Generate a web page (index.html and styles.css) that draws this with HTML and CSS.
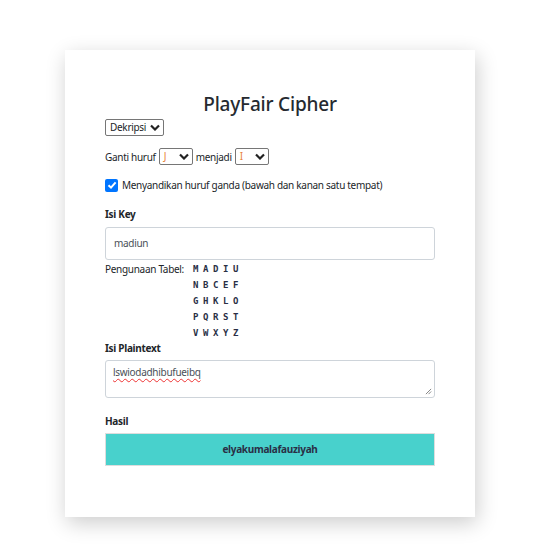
FILE: index.html
```html
<!DOCTYPE html>
<html>
<head>
<meta charset="utf-8">
<link rel="stylesheet" href="styles.css">
</head>
<body>
<div class="card">
  <h1 class="title">PlayFair Cipher</h1>
  <div class="row mode-row">
    <div class="select sel-mode"><span>Dekripsi</span><svg class="chev" viewBox="0 0 10 6"><path d="M1 1 L5 5 L9 1" /></svg></div>
  </div>
  <div class="row replace-row">
    <span>Ganti huruf</span>
    <div class="select sel-letter"><span class="orange">J</span><svg class="chev" viewBox="0 0 10 6"><path d="M1 1 L5 5 L9 1" /></svg></div>
    <span>menjadi</span>
    <div class="select sel-letter"><span class="orange">I</span><svg class="chev" viewBox="0 0 10 6"><path d="M1 1 L5 5 L9 1" /></svg></div>
  </div>
  <div class="row check-row">
    <span class="checkbox"><svg viewBox="0 0 12 12"><path d="M2.5 6.2 L5 8.6 L9.6 3.4" /></svg></span>
    <span>Menyandikan huruf ganda (bawah dan kanan satu tempat)</span>
  </div>
  <div class="label key-label">Isi Key</div>
  <div class="input">madiun</div>
  <div class="table-row">
    <span class="table-label">Pengunaan Tabel:</span>
    <div class="grid">
      <span>M</span><span>A</span><span>D</span><span>I</span><span>U</span>
      <span>N</span><span>B</span><span>C</span><span>E</span><span>F</span>
      <span>G</span><span>H</span><span>K</span><span>L</span><span>O</span>
      <span>P</span><span>Q</span><span>R</span><span>S</span><span>T</span>
      <span>V</span><span>W</span><span>X</span><span>Y</span><span>Z</span>
    </div>
  </div>
  <div class="label plain-label">Isi Plaintext</div>
  <div class="textarea"><span class="spell">lswiodadhibufueibq</span><svg class="grip" viewBox="0 0 8 8"><path d="M7 1 L1 7 M7 4 L4 7" /></svg></div>
  <div class="label result-label">Hasil</div>
  <div class="result">elyakumalafauziyah</div>
</div>
</body>
</html>
```

FILE: styles.css
```css
* { box-sizing: border-box; }
html, body { margin: 0; background: #fff; }
body {
  padding: 50px 0 31px 65px;
  font-family: "Noto Sans", "Open Sans", sans-serif;
  font-size: 10px;
  letter-spacing: -0.3px;
  color: #212529;
}
.card {
  width: 410px;
  height: 467px;
  background: #fff;
  box-shadow: 2px 6px 20px rgba(0, 0, 0, 0.2);
  padding: 40px 40px 0 40px;
}
.title {
  margin: 0;
  height: 29px;
  padding-top: 1px;
  text-align: center;
  font-weight: 500;
  font-size: 19px;
  letter-spacing: -0.2px;
  line-height: 26px;
  color: #252a30;
}
.row { display: flex; align-items: center; gap: 3px; }
.select {
  display: flex;
  align-items: center;
  justify-content: space-between;
  height: 17px;
  border: 1px solid #767676;
  border-radius: 2px;
  padding: 0 3px 0 4px;
  background: #fff;
  line-height: 15px;
}
.chev { width: 10px; height: 7px; fill: none; stroke: #222; stroke-width: 2.2; }
.sel-mode { width: 59px; }
.mode-row { height: 17px; }
.replace-row { margin-top: 12px; height: 17px; }
.sel-letter { width: 34px; }
.orange { color: #e8833a; }
.check-row { margin-top: 14px; height: 12px; gap: 4px; }
.checkbox {
  width: 13px; height: 13px;
  background: #0075ff;
  border-radius: 2px;
  display: flex; align-items: center; justify-content: center;
}
.checkbox svg { width: 12px; height: 12px; fill: none; stroke: #fff; stroke-width: 2; }
.label { font-weight: 700; height: 14px; line-height: 14px; }
.key-label { margin-top: 16px; }
.input {
  margin-top: 6px;
  height: 33px;
  border: 1px solid #ced4da;
  border-radius: 3px;
  padding: 0 8px;
  line-height: 31px;
  color: #495057;
}
.table-row { display: flex; margin-top: 1px; }
.table-label { width: 88px; line-height: 16px; }
.grid {
  display: grid;
  grid-template-columns: repeat(5, 10px);
  grid-auto-rows: 16px;
  font-family: "DejaVu Sans Mono", monospace;
  font-weight: 700;
  font-size: 9px;
  letter-spacing: 0;
  line-height: 16px;
  color: #2a2f45;
}
.plain-label { margin-top: 0; height: 14px; }
.textarea {
  position: relative;
  margin-top: 5px;
  height: 38px;
  border: 1px solid #ced4da;
  border-radius: 3px;
  padding: 4px 7px;
  line-height: 14px;
  color: #495057;
}
.spell { text-decoration: underline wavy #e33; text-decoration-thickness: 1px; text-underline-offset: 2px; }
.grip { position: absolute; right: 2px; bottom: 2px; width: 7px; height: 7px; stroke: #777; stroke-width: 1; fill: none; }
.result-label { margin-top: 16px; }
.result {
  margin-top: 5px;
  height: 33px;
  border: 1px solid #ddd;
  background: #48d1cc;
  text-align: center;
  line-height: 31px;
  font-weight: 700;
  color: #2a2f45;
}
```
